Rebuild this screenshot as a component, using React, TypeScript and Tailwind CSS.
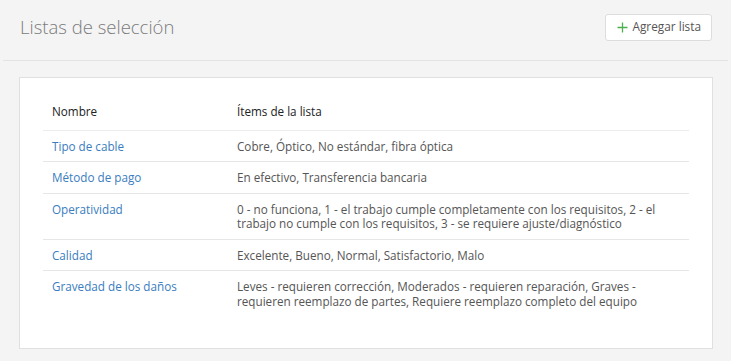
import React from "react";

type Row = { name: string; items: string };

const rows: Row[] = [
  { name: "Tipo de cable", items: "Cobre, Óptico, No estándar, fibra óptica" },
  { name: "Método de pago", items: "En efectivo, Transferencia bancaria" },
  {
    name: "Operatividad",
    items:
      "0 - no funciona, 1 - el trabajo cumple completamente con los requisitos, 2 - el trabajo no cumple con los requisitos, 3 - se requiere ajuste/diagnóstico",
  },
  { name: "Calidad", items: "Excelente, Bueno, Normal, Satisfactorio, Malo" },
  {
    name: "Gravedad de los daños",
    items:
      "Leves - requieren corrección, Moderados - requieren reparación, Graves - requieren reemplazo de partes, Requiere reemplazo completo del equipo",
  },
];

function PlusIcon() {
  return (
    <svg width="11" height="11" viewBox="0 0 11 11" className="shrink-0">
      <path d="M5.5 0.5v10M0.5 5.5h10" stroke="#4caf50" strokeWidth="1.3" />
    </svg>
  );
}

export default function App() {
  return (
    <div className="min-h-[361px] bg-[#f4f4f4] font-['Open_Sans',sans-serif]">
      <div className="mx-[3px] h-[61px] flex items-center justify-between pl-[17px] pr-[16px] border-b border-[#e3e3e3]">
        <h1 className="text-[18.5px] font-light text-[#7b7b7b] -mt-[7px]">
          Listas de selección
        </h1>
        <button
          type="button"
          className="h-[27px] -mt-[6px] flex items-center gap-[5px] pl-[11px] pr-[10px] bg-white border border-[#dddddd] rounded-[3px] text-[11.8px] text-[#555]"
        >
          <PlusIcon />
          Agregar lista
        </button>
      </div>

      <div className="mt-[16px] ml-[19px] w-[694px] h-[272px] bg-white border border-[#e0e0e0] pt-[18px] px-[23px]">
        <table className="w-full border-collapse text-[11.7px] leading-[14.5px]">
          <thead>
            <tr className="border-b border-[#ececec]">
              <th className="w-[185px] pl-[9px] pt-[8px] pb-[11px] text-left font-normal text-[#222]">
                Nombre
              </th>
              <th className="pl-[9px] pr-[9px] pt-[8px] pb-[11px] text-left font-normal text-[#222]">
                Ítems de la lista
              </th>
            </tr>
          </thead>
          <tbody>
            {rows.map((row, i) => (
              <tr
                key={row.name}
                className={i < rows.length - 1 ? "border-b border-[#e6e6e6]" : ""}
              >
                <td className="align-top pl-[9px] py-[8px] text-[#3a7dc0]">
                  <a href="#">{row.name}</a>
                </td>
                <td className="align-top pl-[9px] pr-[9px] py-[8px] text-[#555]">
                  {row.items}
                </td>
              </tr>
            ))}
          </tbody>
        </table>
      </div>
    </div>
  );
}
